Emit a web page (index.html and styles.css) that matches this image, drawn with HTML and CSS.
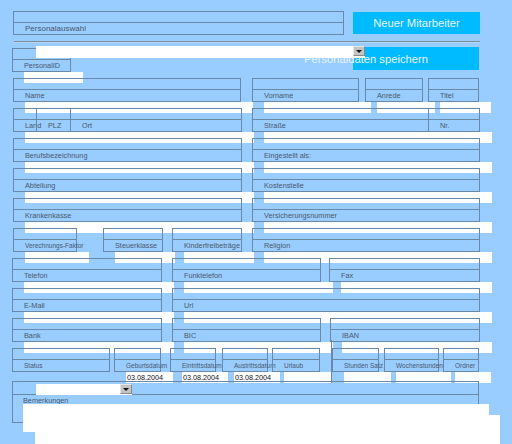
FILE: index.html
```html
<!DOCTYPE html>
<html lang="de">
<head>
<meta charset="utf-8">
<title>Personal</title>
<link rel="stylesheet" href="styles.css">
</head>
<body>
<div class="page">
  <div class="head">
    <div class="f c-sel">
      <div class="box"><div class="top"></div><div class="lab big">Personalauswahl</div></div>
    </div>
    <div class="btn new">Neuer Mitarbeiter</div>
  </div>
  <div class="sep"></div>
  <div class="row2">
    <div class="f c-pid">
      <div class="box"><div class="top"></div><div class="lab">PersonalID</div></div>
      <div class="inp"></div>
    </div>
    <div class="select s-pers"><span class="arrow"></span></div>
    <div class="btn save"><span>Personaldaten speichern</span></div>
  </div>

  <div class="row r-a ml1">
    <div class="f c-name"><div class="box"><div class="top"></div><div class="lab">Name</div></div><div class="inp"></div></div>
    <div class="f c-vor"><div class="box"><div class="top"></div><div class="lab">Vorname</div></div><div class="inp"></div></div>
    <div class="f c-anr"><div class="box"><div class="top"></div><div class="lab">Anrede</div></div><div class="inp"></div></div>
    <div class="f c-tit"><div class="box"><div class="top"></div><div class="lab">Titel</div></div><div class="inp"></div></div>
  </div>

  <div class="row ml1">
    <div class="f c-land"><div class="box"><div class="top"></div><div class="lab">Land</div></div><div class="inp"></div></div>
    <div class="f c-plz"><div class="box"><div class="top"></div><div class="lab">PLZ</div></div><div class="inp"></div></div>
    <div class="f c-ort"><div class="box"><div class="top"></div><div class="lab">Ort</div></div><div class="inp"></div></div>
    <div class="f c-str"><div class="box"><div class="top"></div><div class="lab">Straße</div></div><div class="inp"></div></div>
    <div class="f c-nr"><div class="box"><div class="top"></div><div class="lab">Nr.</div></div><div class="inp"></div></div>
  </div>

  <div class="row ml1">
    <div class="f c-half"><div class="box"><div class="top"></div><div class="lab">Berufsbezeichnung</div></div><div class="inp"></div></div>
    <div class="f c-half2"><div class="box"><div class="top"></div><div class="lab">Eingestellt als:</div></div><div class="inp"></div></div>
  </div>

  <div class="row ml1">
    <div class="f c-half"><div class="box"><div class="top"></div><div class="lab">Abteilung</div></div><div class="inp"></div></div>
    <div class="f c-half2"><div class="box"><div class="top"></div><div class="lab">Kostenstelle</div></div><div class="inp"></div></div>
  </div>

  <div class="row ml1">
    <div class="f c-half"><div class="box"><div class="top"></div><div class="lab">Krankenkasse</div></div><div class="inp"></div></div>
    <div class="f c-half2"><div class="box"><div class="top"></div><div class="lab">Versicherungsnummer</div></div><div class="inp"></div></div>
  </div>

  <div class="row ml1">
    <div class="f c-vf"><div class="box"><div class="top"></div><div class="lab small">Verechnungs-Faktor</div></div><div class="inp"></div></div>
    <div class="f c-stk"><div class="box"><div class="top"></div><div class="lab">Steuerklasse</div></div><div class="inp"></div></div>
    <div class="f c-kfb"><div class="box"><div class="top"></div><div class="lab">Kinderfreibeträge</div></div><div class="inp"></div></div>
    <div class="f c-half2"><div class="box"><div class="top"></div><div class="lab">Religion</div></div><div class="inp"></div></div>
  </div>

  <div class="row">
    <div class="f c-tel"><div class="box"><div class="top"></div><div class="lab">Telefon</div></div><div class="inp"></div></div>
    <div class="f c-mid"><div class="box"><div class="top"></div><div class="lab">Funktelefon</div></div><div class="inp"></div></div>
    <div class="f c-fax"><div class="box"><div class="top"></div><div class="lab">Fax</div></div><div class="inp"></div></div>
  </div>

  <div class="row">
    <div class="f c-tel"><div class="box"><div class="top"></div><div class="lab">E-Mail</div></div><div class="inp"></div></div>
    <div class="f c-url"><div class="box"><div class="top"></div><div class="lab">Url</div></div><div class="inp"></div></div>
  </div>

  <div class="row">
    <div class="f c-tel"><div class="box"><div class="top"></div><div class="lab">Bank</div></div><div class="inp"></div></div>
    <div class="f c-bic"><div class="box"><div class="top"></div><div class="lab">BIC</div></div><div class="inp"></div></div>
    <div class="f c-iban"><div class="box"><div class="top"></div><div class="lab">IBAN</div></div><div class="inp"></div></div>
  </div>

  <div class="row">
    <div class="f c-status"><div class="box"><div class="top"></div><div class="lab small">Status</div></div></div>
    <div class="f c-geb"><div class="box"><div class="top"></div><div class="lab small">Geburtsdatum</div></div><div class="inp val">03.08.2004</div></div>
    <div class="f c-ein"><div class="box"><div class="top"></div><div class="lab small">Eintrittsdatum</div></div><div class="inp val">03.08.2004</div></div>
    <div class="f c-aus"><div class="box"><div class="top"></div><div class="lab small">Austrittsdatum</div></div><div class="inp val">03.08.2004</div></div>
    <div class="f c-url2"><div class="box"><div class="top"></div><div class="lab small">Urlaub</div></div><div class="inp"></div></div>
    <div class="grp">
      <div class="f c-std"><div class="box"><div class="top"></div><div class="lab small">Stunden Satz</div></div><div class="inp"></div></div>
      <div class="f c-woc"><div class="box"><div class="top"></div><div class="lab small">Wochenstunden</div></div><div class="inp"></div></div>
      <div class="f c-ord"><div class="box"><div class="top"></div><div class="lab small">Ordner</div></div><div class="inp"></div></div>
    </div>
  </div>

  <div class="remarks">
    <div class="rbox">
      <div class="rtop"><div class="select s-status"><span class="arrow"></span></div></div>
      <div class="lab">Bemerkungen</div>
    </div>
    <div class="area a1"></div>
    <div class="area a2"></div>
  </div>
</div>
</body>
</html>
```

FILE: styles.css
```css
html, body {
  margin: 0;
  padding: 0;
}
body {
  width: 512px;
  height: 444px;
  overflow: hidden;
  background: #99ccff;
  font-family: "Liberation Sans", Arial, sans-serif;
  --line: #6a88a8;
}
.page {
  padding: 11px 0 0 12px;
}

/* generic field: bordered label box + input below */
.f {
  flex: none;
  display: flex;
  flex-direction: column;
  width: var(--col);
}
.box {
  box-sizing: border-box;
  width: var(--bw);
  height: 24px;
  border: 1px solid var(--line);
}
.top {
  height: 10px;
  border-bottom: 1px solid var(--line);
}
.lab {
  height: 11px;
  line-height: 11px;
  padding-left: 11px;
  font-size: 7.3px;
  color: #4a5a6b;
  white-space: nowrap;
}
.lab.small {
  font-size: 6.5px;
}
.lab.big {
  font-size: 8px;
}
.inp {
  box-sizing: border-box;
  width: var(--bw);
  height: 11px;
  margin-left: 12px;
  background: #fff;
}
.inp.val {
  font-size: 7.2px;
  line-height: 11px;
  color: #111;
  padding-left: 1px;
  white-space: nowrap;
}

/* header */
.head {
  display: flex;
  align-items: flex-start;
}
.c-sel { --col: 331px; --bw: 331px; margin-left: 1px; }
.btn {
  flex: none;
  box-sizing: border-box;
  background: #00bbff;
  color: #e6f4ff;
  font-size: 11.2px;
  text-align: center;
  white-space: nowrap;
}
.new {
  width: 127px;
  height: 22px;
  line-height: 22px;
  margin: 1px 0 0 9px;
}
.sep {
  width: 466px;
  margin: 6px 0 0 2px;
  border-top: 1px solid #7e8d9c;
  border-bottom: 1px solid #b4d6f6;
}
.row2 {
  display: flex;
  align-items: flex-start;
  margin-top: 3px;
}
.c-pid { --col: 58px; --bw: 59px; margin-top: 2px; }
.select {
  flex: none;
  position: relative;
  z-index: 1;
  display: flex;
  justify-content: flex-end;
  align-items: flex-start;
  height: 12px;
  background: #fff;
}
.s-pers {
  width: 329px;
  margin-left: -34px;
}
.arrow {
  box-sizing: border-box;
  width: 12px;
  height: 10px;
  background: #c4c4c4;
  border: 1px solid #e6e6e6;
  border-right-color: #8a8a8a;
  border-bottom-color: #8a8a8a;
  position: relative;
}
.arrow::after {
  content: "";
  position: absolute;
  left: 2px;
  top: 3px;
  border-left: 3px solid transparent;
  border-right: 3px solid transparent;
  border-top: 3px solid #111;
}
.save {
  display: flex;
  justify-content: center;
  align-items: center;
  width: 126px;
  height: 23px;
  padding: 1px 100px 0 0;
  margin: 1px 0 0 -12px;
}

/* main rows */
.row {
  display: flex;
  align-items: flex-start;
  margin-top: -5px;
}
.r-a { margin-top: -5px; }
.ml1 { margin-left: 1px; }

.c-name  { --col: 239px; --bw: 228px; }
.c-vor   { --col: 113px; --bw: 107px; }
.c-anr   { --col: 63px;  --bw: 58px; }
.c-tit   { --col: 62px;  --bw: 51px; }
.c-land  { --col: 23px;  --bw: 24px; }
.c-plz   { --col: 34px;  --bw: 35px; }
.c-ort   { --col: 182px; --bw: 172px; }
.c-str   { --col: 176px; --bw: 177px; }
.c-nr    { --col: 62px;  --bw: 52px; }
.c-half  { --col: 239px; --bw: 229px; }
.c-half2 { --col: 239px; --bw: 228px; }
.c-vf    { --col: 90px;  --bw: 64px; }
.c-stk   { --col: 69px;  --bw: 60px; }
.c-kfb   { --col: 80px;  --bw: 70px; }

.c-tel   { --col: 160px; --bw: 150px; }
.c-mid   { --col: 157px; --bw: 149px; }
.c-fax   { --col: 161px; --bw: 151px; }
.c-url   { --col: 318px; --bw: 308px; }
.c-bic   { --col: 158px; --bw: 149px; }
.c-iban  { --col: 161px; --bw: 150px; }

.c-status { --col: 102px; --bw: 98px; }
.c-geb   { --col: 56px;  --bw: 47px; }
.c-ein   { --col: 52px;  --bw: 46px; }
.c-aus   { --col: 50px;  --bw: 46px; }
.c-url2  { --col: 59px;  --bw: 48px; }
.c-std   { --col: 52px;  --bw: 47px; }
.c-woc   { --col: 59px;  --bw: 55px; }
.c-ord   { --col: 35px;  --bw: 36px; }

.grp {
  flex: none;
  display: flex;
  align-items: flex-start;
  margin-top: -8px;
  padding-top: 8px;
  border-left: 1px solid var(--line);
}

/* remarks */
.remarks {
  display: flex;
  flex-direction: column;
  margin-top: -2px;
}
.rbox {
  box-sizing: border-box;
  width: 467px;
  height: 42px;
  border: 1px solid var(--line);
}
.rtop {
  height: 10px;
  border-bottom: 1px solid var(--line);
}
.rbox .lab {
  padding-left: 10px;
}
.s-status {
  width: 96px;
  height: 11px;
  margin: 2px 0 0 23px;
}
.area {
  flex: none;
  background: #fff;
}
.a1 {
  width: 466px;
  height: 28px;
  margin: -19px 0 0 11px;
}
.a2 {
  width: 465px;
  height: 40px;
  margin: -17px 0 0 23px;
}
```
